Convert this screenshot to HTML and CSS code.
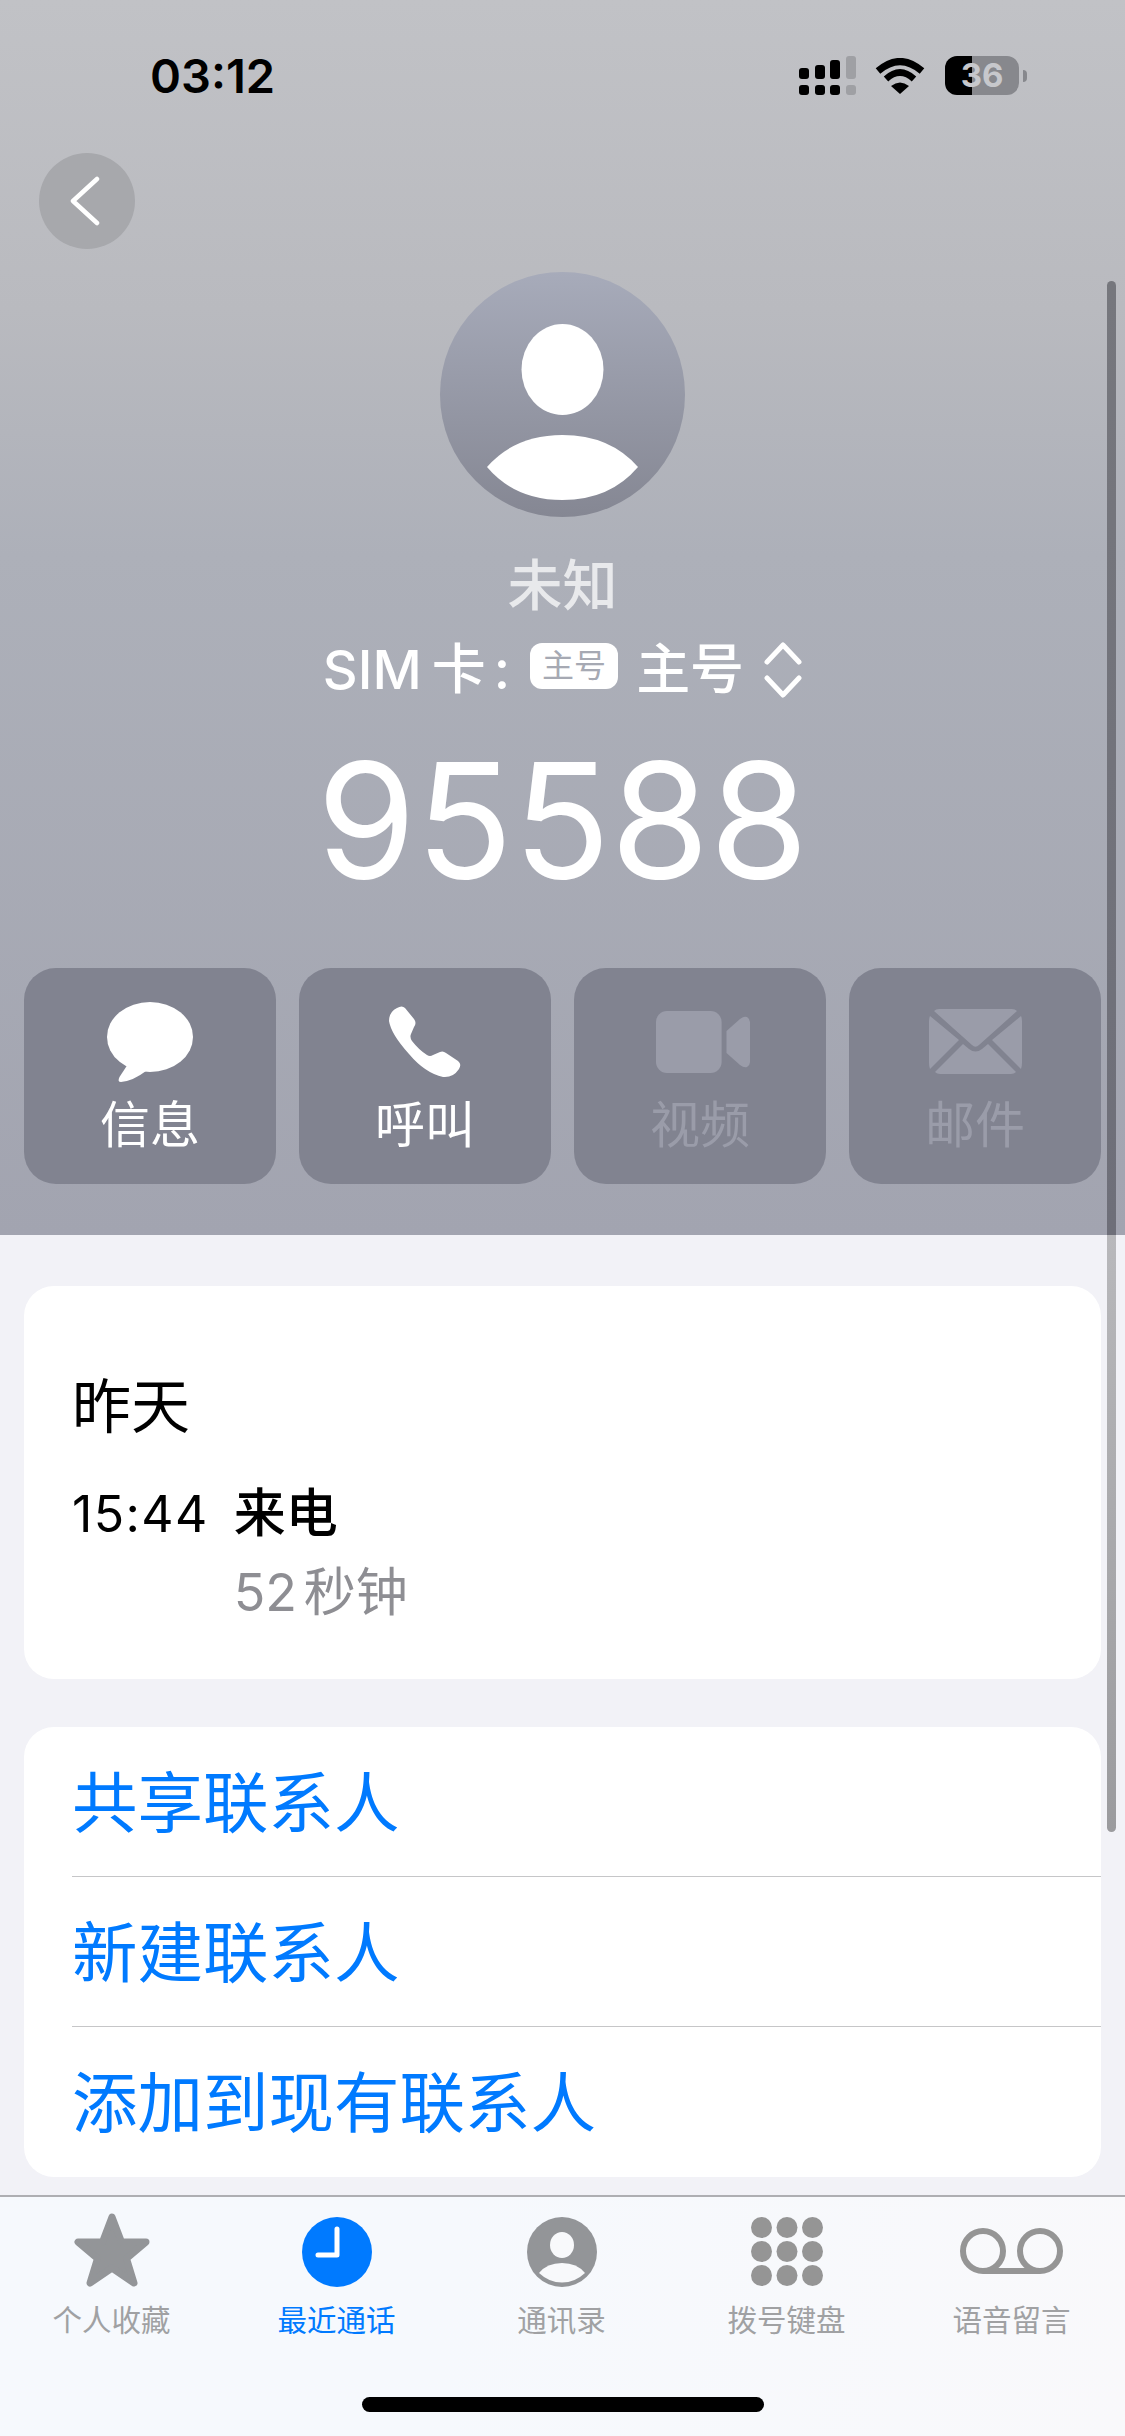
FILE: index.html
```html
<!DOCTYPE html>
<html lang="zh-CN">
<head>
<meta charset="utf-8">
<title>未知</title>
<link rel="stylesheet" href="styles.css">
</head>
<body>
<div class="phone">
  <header class="hero">
    <div class="status">
      <span class="time">03:12</span>
      <div class="status-icons">
        <div class="signal">
          <div class="sig-top">
            <i class="b1"></i><i class="b2"></i><i class="b3"></i><i class="b4 off"></i>
          </div>
          <div class="sig-bot">
            <i></i><i></i><i></i><i class="off"></i>
          </div>
        </div>
        <svg class="wifi" viewBox="0 0 50 36" width="50" height="36">
          <path d="M3 13 Q25 -6 47 13" fill="none" stroke="#000" stroke-width="7"/>
          <path d="M11 21 Q25 8 39 21" fill="none" stroke="#000" stroke-width="6.5"/>
          <path d="M16 28 Q25 21 34 28 L25 36 Z" fill="#000"/>
        </svg>
        <div class="battery"><span>36</span></div>
        <div class="nub"></div>
      </div>
    </div>
    <button class="back">
      <svg viewBox="0 0 30 50" width="30" height="50"><path d="M27 3 L3 25 L27 47" fill="none" stroke="#fff" stroke-width="4.5" stroke-linecap="round" stroke-linejoin="round"/></svg>
    </button>
    <div class="avatar">
      <svg viewBox="0 0 245 245" width="245" height="245">
        <ellipse cx="122.5" cy="97.5" rx="41" ry="45.5" fill="#fff"/>
        <path d="M47 195 Q75 163 122.5 163 Q170 163 198 195 Q170 228 122.5 228 Q75 228 47 195 Z" fill="#fff"/>
      </svg>
    </div>
    <div class="name">未知</div>
    <div class="sim">
      <span class="sim-latin">SIM</span>
      <span class="sim-ka">卡</span>
      <span class="sim-colon">:</span>
      <span class="sim-badge">主号</span>
      <span class="sim-value">主号</span>
      <svg class="updown" viewBox="0 0 38 56" width="38" height="56">
        <path d="M3 20 L19 3 L35 20 M3 36 L19 53 L35 36" fill="none" stroke="#fff" stroke-width="5" stroke-linecap="round" stroke-linejoin="round"/>
      </svg>
    </div>
    <div class="number">95588</div>
    <div class="actions">
      <div class="action">
        <svg class="act-icon" viewBox="0 0 86 80" width="86" height="80"><ellipse cx="43" cy="35" rx="43" ry="35" fill="#fff"/><path d="M21 62 L12.5 75 Q10 80 14 80 Q26 79 39 69 Z" fill="#fff"/></svg>
        <span>信息</span>
      </div>
      <div class="action">
        <svg class="act-icon" viewBox="0 0 72 72" width="72" height="72"><path d="M8 2 Q13 -1 16 2 L25 13 Q28 17 25 21 L22 28 Q20.5 31 23 35 Q30 44 38 49 Q41 51 44 49 L51 46 Q54 44.5 57 47 L69 55 Q73 58 70 63 Q64 72 54 71 Q36 67 20 48 Q2 28 0 15 Q0 6 8 2 Z" fill="#fff"/></svg>
        <span>呼叫</span>
      </div>
      <div class="action off">
        <svg class="act-icon video" viewBox="0 0 94 62" width="94" height="62"><rect width="65.6" height="62" rx="11" fill="#9a9ca9"/><path d="M70.5 20 L84 8 Q88 5 91 6 Q94 8 94 11 V51 Q94 54 91 56 Q88 57 84 54 L70.5 42 Z" fill="#9a9ca9"/></svg>
        <span>视频</span>
      </div>
      <div class="action off">
        <svg class="act-icon" viewBox="0 0 93 66" width="93" height="66"><path d="M5 2 Q7 0 10 0 H83 Q86 0 88 2 L50 36 Q46.5 39.5 43 36 Z M1 7 L30 31 L1 60 Q0 57 0 54 V12 Q0 9 1 7 Z M92 7 L63 31 L92 60 Q93 57 93 54 V12 Q93 9 92 7 Z M6 63 L34 35 L40 40 Q46.5 45 53 40 L59 35 L87 63 Q85 65 82 65 H11 Q8 65 6 63 Z" fill="#9a9ca9"/></svg>
        <span>邮件</span>
      </div>
    </div>
  </header>

  <main class="content">
    <section class="card history">
      <div class="day">昨天</div>
      <div class="call">
        <span class="call-time">15:44</span>
        <div class="call-info">
          <div class="call-type">来电</div>
          <div class="call-len">52 秒钟</div>
        </div>
      </div>
    </section>
    <section class="card links">
      <div class="link">共享联系人</div>
      <div class="link">新建联系人</div>
      <div class="link">添加到现有联系人</div>
    </section>
  </main>

  <nav class="tabs">
    <div class="tab">
      <svg viewBox="0 0 76 74" width="76" height="74"><polygon points="38,4 47.5,29 72,29 52.5,45.5 60,70 38,55 16,70 23.5,45.5 4,29 28.5,29" fill="#939598" stroke="#939598" stroke-width="7" stroke-linejoin="round"/></svg>
      <span>个人收藏</span>
    </div>
    <div class="tab active">
      <svg viewBox="0 0 70 74" width="70" height="74"><circle cx="35" cy="39" r="35" fill="#007aff"/><path d="M35 16 V42 H16" fill="none" stroke="#fff" stroke-width="5" stroke-linecap="round" stroke-linejoin="round"/></svg>
      <span>最近通话</span>
    </div>
    <div class="tab">
      <svg viewBox="0 0 70 74" width="70" height="74"><circle cx="35" cy="39" r="35" fill="#939598"/><ellipse cx="35" cy="32" rx="12" ry="13" fill="#f8f9fb"/><path d="M12 60 Q20 50 35 50 Q50 50 58 60 Q48 69.5 35 69.5 Q22 69.5 12 60 Z" fill="#f8f9fb"/></svg>
      <span>通讯录</span>
    </div>
    <div class="tab">
      <svg viewBox="0 0 72 74" width="72" height="74" fill="#959595">
        <circle cx="10.5" cy="14.5" r="10.5"/><circle cx="36" cy="14.5" r="10.5"/><circle cx="61.5" cy="14.5" r="10.5"/>
        <circle cx="10.5" cy="38.5" r="10.5"/><circle cx="36" cy="38.5" r="10.5"/><circle cx="61.5" cy="38.5" r="10.5"/>
        <circle cx="10.5" cy="62.5" r="10.5"/><circle cx="36" cy="62.5" r="10.5"/><circle cx="61.5" cy="62.5" r="10.5"/>
      </svg>
      <span>拨号键盘</span>
    </div>
    <div class="tab">
      <svg viewBox="0 0 103 74" width="103" height="74"><g fill="none" stroke="#959595" stroke-width="6"><circle cx="23" cy="38" r="20"/><circle cx="80" cy="38" r="20"/><path d="M23 58 H80"/></g></svg>
      <span>语音留言</span>
    </div>
    <div class="home"></div>
  </nav>
  <div class="scrollbar"></div>
</div>
</body>
</html>
```

FILE: styles.css
```css
* { box-sizing: border-box; }
html, body { margin: 0; padding: 0; }
body {
  font-family: Inter, "Noto Sans CJK SC", sans-serif;
  background: #f2f2f7;
}
.phone {
  position: relative;
  width: 1125px;
  height: 2436px;
  overflow: hidden;
  display: flex;
  flex-direction: column;
  background: #f2f2f7;
}

/* hero */
.hero {
  height: 1235px;
  flex: none;
  display: flex;
  flex-direction: column;
  align-items: center;
  background: linear-gradient(180deg, #c1c2c6 0%, #b9babf 25%, #adb0b9 45%, #a2a4b0 100%);
}
.status {
  width: 100%;
  height: 153px;
  flex: none;
  display: flex;
  justify-content: space-between;
  align-items: flex-start;
  padding: 48px 98px 0 150px;
}
.time {
  font-size: 47px;
  line-height: 56px;
  font-weight: 600;
  color: #000;
}
.status-icons {
  display: flex;
  align-items: center;
  padding-top: 8px;
}
.signal {
  display: flex;
  flex-direction: column;
  gap: 6px;
  width: 57px;
  margin-right: 19px;
}
.signal i { display: block; width: 10px; background: #000; border-radius: 3px; }
.signal i.off { background: #9fa0a4; }
.sig-top, .sig-bot { display: flex; justify-content: space-between; align-items: flex-end; }
.sig-top { height: 23px; }
.sig-bot i { height: 10px; }
.b1 { height: 11px; }
.b2 { height: 14px; }
.b3 { height: 19px; }
.b4 { height: 23px; }
.wifi { margin-right: 20px; }
.battery {
  width: 74px;
  height: 39px;
  border-radius: 12px;
  background: linear-gradient(90deg, #000 27px, #87888d 27px);
  display: flex;
  align-items: center;
  justify-content: center;
}
.battery span {
  font-size: 33px;
  line-height: 39px;
  font-weight: 700;
  color: #c7c8cc;
}
.nub {
  width: 4px;
  height: 12px;
  margin-left: 4px;
  background: #87888d;
  border-radius: 0 6px 6px 0;
}
.back {
  align-self: flex-start;
  margin-left: 39px;
  width: 96px;
  height: 96px;
  flex: none;
  border: 0;
  padding: 0 5px 0 0;
  border-radius: 50%;
  background: #a7a8ac;
  display: flex;
  align-items: center;
  justify-content: center;
}
.avatar {
  width: 245px;
  height: 245px;
  flex: none;
  margin-top: 23px;
  border-radius: 50%;
  background: linear-gradient(180deg, #a7abba 0%, #858793 100%);
}
.avatar svg { display: block; }
.name {
  margin-top: 36px;
  font-size: 55px;
  line-height: 64px;
  font-weight: 500;
  color: rgba(255, 255, 255, 0.72);
}
.sim {
  margin-top: 23px;
  height: 60px;
  display: flex;
  align-items: center;
  color: #fff;
  font-size: 54px;
  line-height: 60px;
  font-weight: 500;
}
.sim-ka { margin-left: 10px; }
.sim-colon { margin-left: 8px; }
.sim-badge {
  width: 88px;
  height: 46px;
  margin: 0 0 8px 20px;
  border-radius: 12px;
  background: #fff;
  color: #a6a9b3;
  font-size: 32px;
  font-weight: 400;
  line-height: 46px;
  text-align: center;
}
.sim-value { margin-left: 18px; }
.updown { margin-left: 20px; }
.number {
  margin-top: 25px;
  font-size: 160px;
  line-height: 190px;
  font-weight: 400;
  color: #fff;
}
.actions {
  align-self: stretch;
  margin: 53px 24px 0;
  display: grid;
  grid-template-columns: repeat(4, 252px);
  justify-content: space-between;
}
.action {
  height: 216px;
  border-radius: 32px;
  background: #818390;
  display: flex;
  flex-direction: column;
  align-items: center;
  color: #fff;
  font-size: 50px;
  line-height: 56px;
}
.act-icon { height: 80px; margin-top: 34px; flex: none; }
.act-icon.video { margin-left: 5px; }
.action span { margin-top: 15px; }
.action.off { color: #9a9ca9; }

/* content */
.content {
  flex: 1;
  padding: 51px 24px 0;
  display: flex;
  flex-direction: column;
  gap: 48px;
}
.card {
  background: #fff;
  border-radius: 30px;
}
.history {
  height: 393px;
  padding: 83px 48px 0;
}
.day {
  font-size: 59px;
  line-height: 76px;
  color: #000;
}
.call {
  margin-top: 34px;
  display: flex;
  gap: 25px;
}
.call-time {
  font-size: 50px;
  line-height: 70px;
  color: #000;
  letter-spacing: 1.4px;
}
.call-type {
  font-size: 52px;
  line-height: 70px;
  font-weight: 500;
  color: #000;
}
.call-len {
  margin-top: 9px;
  font-size: 52px;
  line-height: 70px;
  color: #8e8e93;
  word-spacing: -8px;
}
.links {
  height: 450px;
  padding-left: 48px;
}
.link {
  height: 150px;
  font-size: 65.5px;
  line-height: 154px;
  color: #007aff;
  border-bottom: 1px solid #c6c6c8;
}
.link:last-child { border-bottom: 0; }

/* tabs */
.tabs {
  position: relative;
  height: 241px;
  flex: none;
  border-top: 2px solid #aeaeb2;
  background: linear-gradient(100deg, #f6f9fd 0%, #f6f9fd 40%, #f9f9fb 100%);
  display: grid;
  grid-template-columns: repeat(5, 225px);
  padding-top: 16px;
}
.tab {
  margin-left: -2px;
  display: flex;
  flex-direction: column;
  align-items: center;
  color: #a0a1a3;
  font-size: 29.5px;
  line-height: 36px;
}
.tab svg { flex: none; }
.tab span { margin-top: 15px; }
.tab.active { color: #007aff; }
.home {
  position: absolute;
  left: 362px;
  top: 200px;
  width: 402px;
  height: 15px;
  border-radius: 8px;
  background: #000;
}
.scrollbar {
  position: absolute;
  left: 1107px;
  top: 281px;
  width: 9px;
  height: 1551px;
  border-radius: 5px;
  background: linear-gradient(180deg, #76777d 0, #6e6f79 954px, #b8b8bb 954px, #9b9b9e 100%);
}
```
